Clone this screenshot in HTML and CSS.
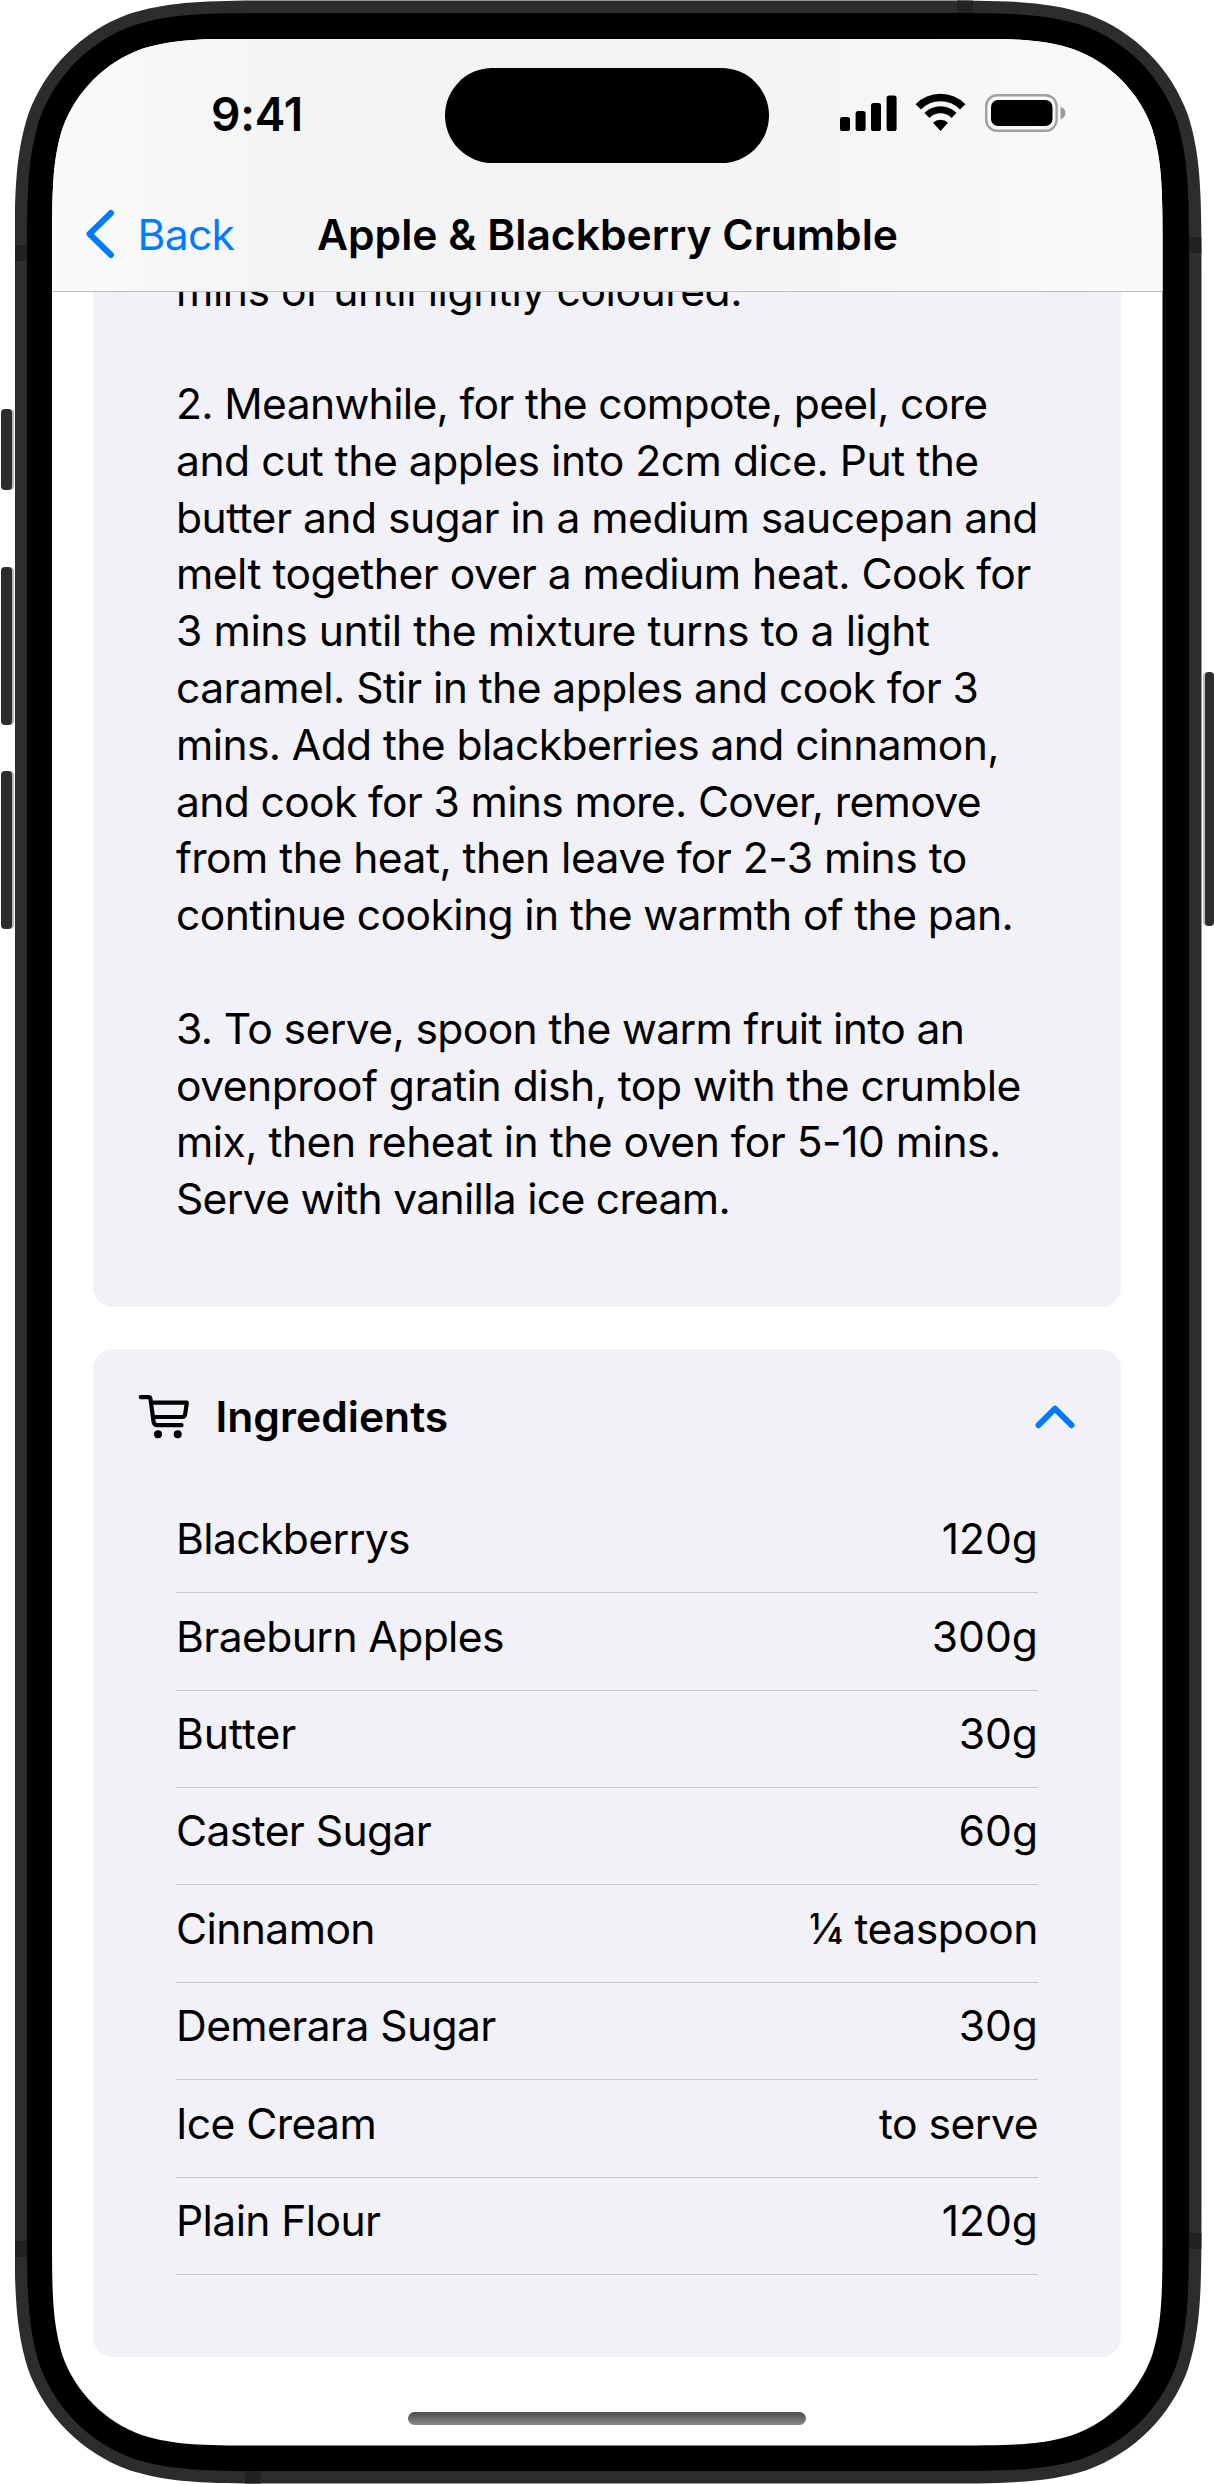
FILE: index.html
```html
<!DOCTYPE html>
<html lang="en">
<head>
<meta charset="utf-8">
<title>Apple &amp; Blackberry Crumble</title>
<link rel="stylesheet" href="styles.css">
</head>
<body>
<div class="device">
  <div class="keys keys-left">
    <div class="key key-action"></div>
    <div class="key key-volume"></div>
    <div class="key key-volume"></div>
  </div>
  <div class="frame">
    <div class="bezel">
      <div class="screen">
        <header class="header">
          <div class="status">
            <div class="clock">9:41</div>
            <div class="island"></div>
            <svg class="status-icons" width="226" height="40" viewBox="0 0 226 40">
              <rect x="0" y="24" width="10" height="14" rx="2.6"/>
              <rect x="15.6" y="18" width="10" height="20" rx="2.6"/>
              <rect x="31" y="10" width="10" height="28" rx="2.6"/>
              <rect x="46.6" y="2.5" width="10" height="35.500" rx="2.6"/>
              <g fill="none" stroke="#000">
                <path d="M78.300 13.800A31 31 0 0 1 122.700 13.800" stroke-width="7.600"/>
                <path d="M87 22.500A19 19 0 0 1 114 22.500" stroke-width="7"/>
              </g>
              <path d="M100.500 38L93 29.800A10.800 10.800 0 0 1 108 29.800Z"/>
              <rect x="146.200" y="2.200" width="70.400" height="35.600" rx="11" fill="none" stroke="#a0a0a2" stroke-width="2.400"/>
              <rect x="151" y="7" width="61.500" height="26" rx="7"/>
              <path d="M220.500 13.500C227 16 227 24 220.500 26.500Z" fill="#9a9a9c"/>
            </svg>
          </div>
          <nav class="navbar">
            <a class="back">
              <svg width="30" height="50" viewBox="0 0 30 50"><path d="M26 4L4.500 25L26 46"/></svg>
              <span>Back</span>
            </a>
            <h1 class="title">Apple &amp; Blackberry Crumble</h1>
          </nav>
        </header>
        <main class="content">
          <section class="card method">
            <p class="step-one"><span>mins or until lightly coloured.</span></p>
            <p class="step-two">
              <span>2. Meanwhile, for the compote, peel, core</span>
              <span>and cut the apples into 2cm dice. Put the</span>
              <span>butter and sugar in a medium saucepan and</span>
              <span>melt together over a medium heat. Cook for</span>
              <span>3 mins until the mixture turns to a light</span>
              <span>caramel. Stir in the apples and cook for 3</span>
              <span>mins. Add the blackberries and cinnamon,</span>
              <span>and cook for 3 mins more. Cover, remove</span>
              <span>from the heat, then leave for 2-3 mins to</span>
              <span>continue cooking in the warmth of the pan.</span>
            </p>
            <p class="step-three">
              <span>3. To serve, spoon the warm fruit into an</span>
              <span>ovenproof gratin dish, top with the crumble</span>
              <span>mix, then reheat in the oven for 5-10 mins.</span>
              <span>Serve with vanilla ice cream.</span>
            </p>
          </section>
          <section class="card ingredients">
            <div class="card-head">
              <svg class="cart" width="52" height="46" viewBox="0 0 52 46">
                <path d="M2.800 3.200H10.500Q12.300 3.200 12.500 5L15.600 28Q16.100 31.200 19.500 31.200H43.500M13.500 8.700H48.800L47.200 20Q46.800 23 44 23H15.500"/>
                <circle cx="20" cy="40.300" r="4"/><circle cx="39.700" cy="40.300" r="4"/>
              </svg>
              <h2>Ingredients</h2>
              <svg class="chevron" width="40" height="24" viewBox="0 0 40 24"><path d="M3.500 20.200L20 3.700L36.500 20.200"/></svg>
            </div>
            <ul class="list">
              <li><span>Blackberrys</span><span>120g</span></li>
              <li><span>Braeburn Apples</span><span>300g</span></li>
              <li><span class="wide">Butter</span><span>30g</span></li>
              <li><span>Caster Sugar</span><span>60g</span></li>
              <li><span>Cinnamon</span><span class="words">¼ teaspoon</span></li>
              <li><span>Demerara Sugar</span><span>30g</span></li>
              <li><span>Ice Cream</span><span class="words">to serve</span></li>
              <li><span>Plain Flour</span><span>120g</span></li>
            </ul>
          </section>
        </main>
        <div class="home"></div>
      </div>
    </div>
  </div>
  <div class="keys keys-right">
    <div class="key key-power"></div>
  </div>
</div>
</body>
</html>
```
FILE: styles.css
```css
* { box-sizing: border-box; margin: 0; padding: 0; }
body {
  width: 1214px;
  height: 2484px;
  overflow: hidden;
  background: #fff;
  color: #000;
  font-family: Inter, "Liberation Sans", sans-serif;
  font-size: 42.6px;
  line-height: 56.8px;
  -webkit-font-smoothing: antialiased;
}
.device { display: grid; grid-template-columns: 14.5px 1187px 12.5px; height: 2484px; }

/* side keys */
.keys { display: flex; flex-direction: column; }
.keys-left { padding-top: 408.5px; gap: 44px; }
.keys-left .key { margin-left: .7px; width: 11.500px; box-shadow: 2px 0 0 #b7b7b7; }
.key { background: #2c2c2c; border-radius: 4px; }
.key-action { height: 81px; margin-bottom: 33.500px; }
.key-volume { height: 158px; }
.key-volume + .key-volume { margin-top: 1.500px; }
.keys-right { padding-top: 672px; }
.keys-right .key-power { height: 254px; width: 9px; margin-left: 3px; box-shadow: -2px 0 0 #c0c0c0; }

/* continuous-corner shells */
.frame {
  height: 2484px;
  padding: 13px 12.500px;
  background:
    linear-gradient(#222, #222) 942px 0 / 16px 13px no-repeat,
    linear-gradient(#222, #222) 230px 2471px / 16px 13px no-repeat,
    linear-gradient(#212121, #212121) 0 245px / 13px 16px no-repeat,
    linear-gradient(#212121, #212121) 0 2241px / 13px 16px no-repeat,
    linear-gradient(#212121, #212121) 1174px 237px / 13px 16px no-repeat,
    linear-gradient(#212121, #212121) 1174px 2233px / 13px 16px no-repeat,
    #2c2c2c;
  clip-path: path("M276.7 0.5H910.3c79.7 0 119.5 0 162.4 13.6c46.8 17 83.7 53.9 100.7 100.7c13.6 42.9 13.6 82.7 13.6 162.4V2206.800c0 79.7 0 119.5 -13.6 162.4c-17 46.8 -53.9 83.7 -100.7 100.7c-42.9 13.6 -82.7 13.6 -162.4 13.6H276.7c-79.7 0 -119.5 0 -162.4 -13.6c-46.8 -17 -83.7 -53.9 -100.7 -100.7c-13.6 -42.9 -13.6 -82.7 -13.6 -162.4V277.200c0 -79.7 0 -119.5 13.6 -162.4c17 -46.8 53.9 -83.7 100.7 -100.7c42.9 -13.6 82.7 -13.6 162.4 -13.6Z");
}
.bezel {
  height: 2458px;
  padding: 25.500px 26.500px 25.500px 25px;
  background: #000;
  clip-path: path("M256.8 0H905.2c73.9 0 110.9 0 150.7 12.6c43.5 15.8 77.7 50 93.5 93.5c12.6 39.8 12.6 76.8 12.6 150.7V2201.2c0 73.9 0 110.9 -12.6 150.7c-15.8 43.5 -50 77.7 -93.5 93.5c-39.8 12.6 -76.8 12.6 -150.7 12.6H256.8c-73.9 0 -110.9 0 -150.7 -12.6c-43.5 -15.8 -77.7 -50 -93.5 -93.5c-12.6 -39.8 -12.6 -76.8 -12.6 -150.7V256.8c0 -73.9 0 -110.9 12.6 -150.7c15.8 -43.5 50 -77.7 93.5 -93.5c39.8 -12.6 76.8 -12.6 150.7 -12.6Z");
}
.screen {
  height: 2407px;
  display: flex;
  flex-direction: column;
  background: #fff;
  clip-path: path("M217 0H893.500c62.5 0 93.8 0 127.4 10.6c36.7 13.4 65.7 42.3 79 79c10.6 33.6 10.6 64.9 10.6 127.4V2190c0 62.5 0 93.8 -10.6 127.4c-13.4 36.7 -42.3 65.7 -79 79c-33.6 10.6 -64.9 10.6 -127.4 10.6H217c-62.5 0 -93.8 0 -127.4 -10.6c-36.7 -13.4 -65.7 -42.3 -79 -79c-10.6 -33.6 -10.6 -64.9 -10.6 -127.4V217c0 -62.5 0 -93.8 10.6 -127.4c13.4 -36.7 42.3 -65.7 79 -79c33.6 -10.6 64.9 -10.6 127.4 -10.6Z");
}

/* status bar + navigation bar */
.header {
  flex: none;
  height: 253px;
  border-bottom: 1px solid #bfbfc3;
  background: linear-gradient(90deg, #fafafb 0%, #f6f8f8 10%, #f3f4f6 22%, #f3f3f6 55%, #f6f6f9 75%, #fafafc 100%);
}
.status { display: grid; grid-template-columns: 393px 324px 1fr; padding-top: 29px; height: 146px; }
.clock { padding: 18px 0 0 159px; font-size: 46px; font-weight: 600; letter-spacing: -.2px; white-space: nowrap; }
.island { height: 95px; border-radius: 47.500px; background: #000; }
.status-icons { margin: 25.500px 0 0 71px; }
.navbar { display: grid; grid-template-columns: 265px 1fr; align-items: center; padding-top: 20.500px; }
.back { display: flex; align-items: center; gap: 22.500px; padding-left: 33px; color: #007aff; }
.back span { padding-top: 1px; letter-spacing: -.7px; }
.back path, .chevron path { fill: none; stroke: #007aff; stroke-width: 6; stroke-linecap: round; stroke-linejoin: round; }
.title { font-size: 42.6px; font-weight: 600; white-space: nowrap; line-height: 56.8px; padding-top: 2px; }

/* scrolled content */
.content { height: 2066px; overflow: hidden; padding: 0 41.500px 0 41px; flex: none; }
.card { background: #f2f1f7; border-radius: 20px; }
.method { height: 1045.500px; margin-top: -30px; padding: 1px 0 0 83px; white-space: nowrap; display: flex; flex-direction: column; gap: 56.800px; }
.method span { display: block; letter-spacing: -.52px; }
.step-one span { letter-spacing: -.43px; }
.step-two span:nth-child(1) { letter-spacing: -.66px; }
.step-two span:nth-child(2) { letter-spacing: -.48px; }
.step-two span:nth-child(5) { letter-spacing: -.39px; }
.step-two span:nth-child(6) { letter-spacing: -.57px; }
.step-two span:nth-child(7) { letter-spacing: -.61px; }
.step-two span:nth-child(8) { letter-spacing: -.65px; }
.step-two span:nth-child(10) { letter-spacing: -.62px; }
.step-three span:nth-child(1) { letter-spacing: -.62px; }
.step-three span:nth-child(4) { letter-spacing: -.71px; }
.ingredients { margin-top: 42px; height: 1008px; }
.card-head { display: grid; grid-template-columns: 77.500px 1fr 40px; align-items: center; padding: 39px 46px 0 45px; }
.card-head h2 { font-size: 42.6px; font-weight: 600; line-height: 56.800px; padding-top: 1px; }
.cart path { fill: none; stroke: #000; stroke-width: 4.200; stroke-linecap: round; stroke-linejoin: round; }
.list { list-style: none; margin: 50px 83px 0; }
.list li { display: flex; justify-content: space-between; height: 97.400px; padding-top: 15.500px; border-bottom: 1px solid #c9c8ce; }
.list span:first-child { letter-spacing: -.6px; }
.list span.wide { letter-spacing: 0; }
.list .words { letter-spacing: -.5px; }
.home { width: 398px; height: 13px; margin: 54px 0 0 356px; border-radius: 7px; background: linear-gradient(#4c4c4c, #888); flex: none; }
```
